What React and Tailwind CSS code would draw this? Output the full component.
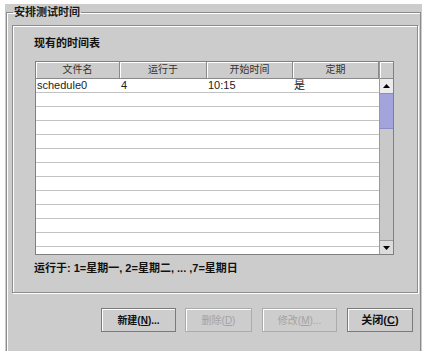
export default function App() {
  const rows = Array.from({ length: 13 });
  const cols = [
    { w: "w-[84px]", h: "文件名", v: "schedule0" },
    { w: "w-[87px]", h: "运行于", v: "4" },
    { w: "w-[86px]", h: "开始时间", v: "10:15" },
    { w: "w-[86px]", h: "定期", v: "是" },
  ];
  return (
    <div className="w-[428px] h-[357px] bg-white pl-[5px] pt-[4px] font-['Liberation_Sans','Noto_Sans_CJK_SC',sans-serif] text-[#111]">
      <div className="w-[417px] h-[347px] bg-[#cccccc] pl-[1px] pt-[1px]">
        <fieldset className="w-[415px] h-[346px] border border-b-0 border-[#8a8a8a] shadow-[inset_1px_1px_0_#ffffff] m-0 p-0 min-w-0">
          <legend className="ml-[6px] px-[1px] text-[11px] font-bold leading-[14px] text-[#1a1a1a]">安排测试时间</legend>
          <div className="ml-[5px] mt-[6px] w-[406px] h-[268px] border border-[#8c8c8c] shadow-[1px_1px_0_#ffffff,inset_1px_1px_0_#ffffff] flex flex-col">
            <div className="pl-[21px] pt-[9px] text-[11px] font-bold leading-[16px]">现有的时间表</div>
            <div className="ml-[22px] mt-[10px] w-[359px] h-[194px] border border-[#808080] flex">
              <div className="w-[343px] flex flex-col">
                <div className="h-[17px] flex bg-[#cccccc]">
                  {cols.map((c, i) => (
                    <div
                      key={i}
                      className={`${c.w} h-[17px] border-r border-b border-[#8a8a8a] shadow-[inset_1px_1px_0_#ffffff] flex items-center justify-center text-[10px] leading-[16px] text-[#333]`}
                    >
                      {c.h}
                    </div>
                  ))}
                </div>
                <div className="flex-1 bg-white overflow-hidden">
                  {rows.map((_, r) => (
                    <div key={r} className="h-[14px] border-b border-[#c2c2c2] flex">
                      {cols.map((c, i) => (
                        <div key={i} className={`${c.w} pl-[1px] text-[11px] leading-[13px] text-[#222]`}>
                          {r === 0 ? c.v : ""}
                        </div>
                      ))}
                    </div>
                  ))}
                </div>
              </div>
              <div className="w-[14px] flex flex-col border-l border-[#9a9a9a] bg-[#cacaca]">
                <div className="h-[17px] border-b border-[#8a8a8a] shadow-[inset_1px_1px_0_#ffffff] bg-[#cccccc]" />
                <div className="h-[14px] bg-[#ececec] flex items-center justify-center">
                  <svg width="7" height="4" viewBox="0 0 7 4"><polygon points="3.5,0 7,4 0,4" fill="#000" /></svg>
                </div>
                <div className="h-[36px] bg-[#a4a4dc] border-y border-[#8c8cc4]" />
                <div className="flex-1 bg-[#c9c9c9]" />
                <div className="h-[14px] bg-[#dcdcdc] border-t border-[#9a9a9a] flex items-center justify-center">
                  <svg width="7" height="4" viewBox="0 0 7 4"><polygon points="0,0 7,0 3.5,4" fill="#000" /></svg>
                </div>
              </div>
            </div>
            <div className="pl-[21px] mt-[5px] text-[11px] font-bold leading-[16px] whitespace-nowrap">
              运行于: 1=星期一, 2=星期二, ... ,7=星期日
            </div>
          </div>
          <div className="flex pl-[94px] mt-[15px]">
            <button className="w-[75px] h-[24px] border border-[#7a7a7a] shadow-[inset_1px_1px_0_#ffffff] bg-[#cdcdcd] text-[10px] font-bold text-[#111] flex items-center justify-center">
              新建(<span className="underline">N</span>)...
            </button>
            <button className="ml-[9px] w-[67px] h-[24px] border border-[#ababab] shadow-[inset_1px_1px_0_#ffffff] bg-[#cdcdcd] text-[10px] text-[#a3a3a3] flex items-center justify-center">
              删除(<span className="underline">D</span>)
            </button>
            <button className="ml-[10px] w-[75px] h-[24px] border border-[#ababab] shadow-[inset_1px_1px_0_#ffffff] bg-[#cdcdcd] text-[10px] text-[#a3a3a3] flex items-center justify-center">
              修改(<span className="underline">M</span>)...
            </button>
            <button className="ml-[10px] w-[66px] h-[24px] border border-[#7a7a7a] shadow-[inset_1px_1px_0_#ffffff] bg-[#cdcdcd] text-[11px] font-bold text-[#111] flex items-center justify-center">
              关闭(<span className="underline">C</span>)
            </button>
          </div>
        </fieldset>
      </div>
    </div>
  );
}
